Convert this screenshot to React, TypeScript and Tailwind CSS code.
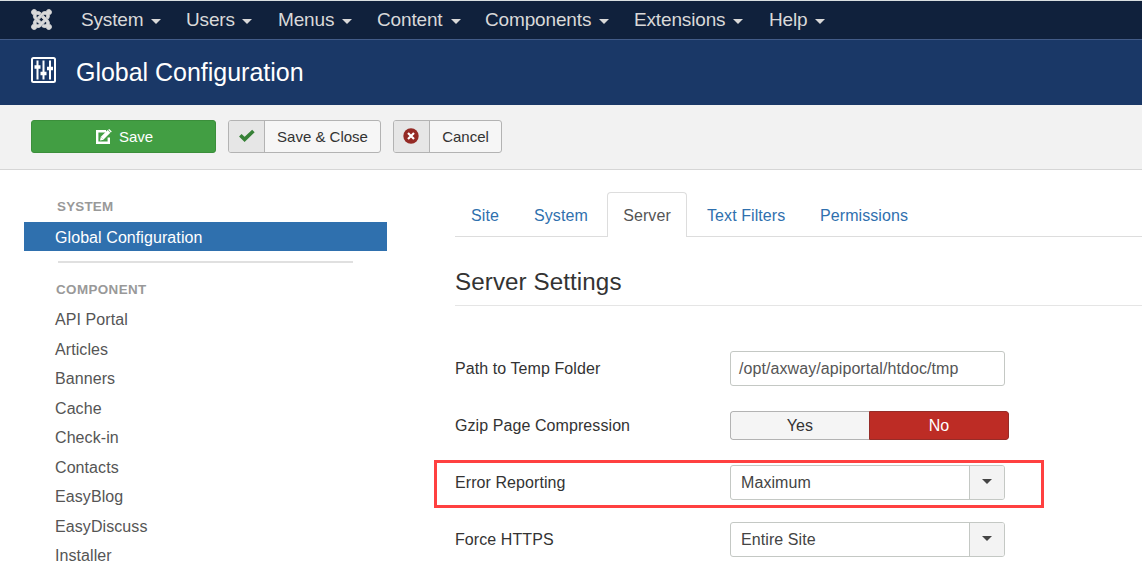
import React from "react";
import { FaJoomla } from "react-icons/fa";

const menus = [
  { label: "System", width: "w-[105px]", text: "w-[62px]" },
  { label: "Users", width: "w-[92px]", text: "w-[48px]" },
  { label: "Menus", width: "w-[99px]", text: "w-[56px]" },
  { label: "Content", width: "w-[108px]", text: "w-[66px]" },
  { label: "Components", width: "w-[149px]", text: "w-[106px]" },
  { label: "Extensions", width: "w-[135px]", text: "w-[91px]" },
  { label: "Help", width: "w-[80px]", text: "w-[38px]" },
];

const components = [
  "API Portal",
  "Articles",
  "Banners",
  "Cache",
  "Check-in",
  "Contacts",
  "EasyBlog",
  "EasyDiscuss",
  "Installer",
];

function Caret({ className }: { className: string }) {
  return (
    <svg viewBox="0 0 10 5" preserveAspectRatio="none" className={className} fill="currentColor">
      <path d="M0 0h10L5 5z" />
    </svg>
  );
}

function SlidersIcon() {
  return (
    <svg viewBox="0 0 25 26" className="h-[26px] w-[25px]" fill="none" stroke="white">
      <rect x="1" y="1" width="23" height="24" rx="1.5" strokeWidth="2" />
      <path d="M6.5 3.5v19M12.5 3.5v19M19 3.5v19" strokeWidth="2" />
      <path d="M3.5 10h6M9.5 16.5h6M16 11.5h6" strokeWidth="3.4" />
    </svg>
  );
}

function EditIcon() {
  return (
    <svg viewBox="0 0 16 15" className="h-[15px] w-4" fill="none" stroke="white">
      <path d="M10 2.2H1.2v11.6h11.6V8.5" strokeWidth="2.4" />
      <path d="M6.2 9.2 13 2.4" strokeWidth="3.8" />
      <path d="M4 11.5l.8-3.8 3 3zM12.2.8 13.2 0l2.6 2.6-1 1z" fill="white" stroke="none" />
    </svg>
  );
}

function CheckIcon() {
  return (
    <svg viewBox="0 0 16 13" className="h-[13px] w-4" fill="none" stroke="#378137" strokeWidth="3.6">
      <path d="M1.3 6.2l4.3 4.2L14.4 2" />
    </svg>
  );
}

function CancelIcon() {
  return (
    <svg viewBox="0 0 16 16" className="size-4">
      <circle cx="8" cy="8" r="7.7" fill="#942a25" />
      <path d="M5 5l6 6M11 5l-6 6" stroke="white" strokeWidth="2.2" />
    </svg>
  );
}

function Field({ label, children }: { label: string; children: React.ReactNode }) {
  return (
    <div className="flex h-[57px] items-center">
      <div className="w-[275px] shrink-0">{label}</div>
      {children}
    </div>
  );
}

function Select({ value }: { value: string }) {
  return (
    <div className="flex h-[35px] w-[275px] overflow-hidden rounded-[3px] border border-[#c4c8c4] text-[#444]">
      <div className="flex flex-1 items-center pl-[10px]">{value}</div>
      <div className="flex w-[35px] items-center justify-center border-l border-[#c4c8c4] bg-[#f3f3f3]">
        <Caret className="mr-px mb-0.5 h-[5px] w-[10px]" />
      </div>
    </div>
  );
}

export default function App() {
  return (
    <div className="flex h-[570px] w-[1142px] flex-col overflow-hidden bg-white font-['Liberation_Sans',sans-serif] text-base leading-5 tracking-[0.08px] text-[#333]">
      <nav className="flex h-10 shrink-0 items-center border-t border-b border-t-[#d9dfe0] border-b-[#425b87] bg-[#10213c] text-[19px] tracking-[-0.15px] text-[#d9d9d9]">
        <div className="w-[81px] shrink-0 pl-[30px]">
          <FaJoomla className="mb-0.5 size-[23px] overflow-visible stroke-current [stroke-width:18px]" />
        </div>
        {menus.map((m) => (
          <div key={m.label} className={`flex shrink-0 items-center whitespace-nowrap ${m.width}`}>
            <span className={m.text}>{m.label}</span>
            <Caret className="mt-[3px] ml-2 h-[5px] w-[10px]" />
          </div>
        ))}
      </nav>
      <header className="flex h-[65px] shrink-0 items-center bg-[#1a3867] pb-0.5 pl-[31px] text-white">
        <div className="-mt-1">
          <SlidersIcon />
        </div>
        <h1 className="ml-5 text-[25px] tracking-[-0.02px]">Global Configuration</h1>
      </header>
      <div className="flex h-[65px] shrink-0 gap-3 border-b border-[#d6d6d6] bg-[#f2f2f2] pt-[15px] pl-[31px] text-[15px] tracking-normal">
        <button className="flex h-[33px] w-[185px] items-center justify-center gap-[7px] rounded-[3px] border border-[#3b8f3b] bg-[#429e43] pl-0.5 text-white">
          <EditIcon />
          Save
        </button>
        <button className="flex h-[33px] w-[153px] overflow-hidden rounded-[3px] border border-[#b3b3b3] bg-[#f6f6f6]">
          <span className="flex h-full w-9 items-center justify-center border-r border-[#b3b3b3] bg-[#e6e6e6] pb-0.5">
            <CheckIcon />
          </span>
          <span className="flex h-full flex-1 items-center justify-center">Save &amp; Close</span>
        </button>
        <button className="flex h-[33px] w-[109px] overflow-hidden rounded-[3px] border border-[#b3b3b3] bg-[#f6f6f6]">
          <span className="flex h-full w-9 items-center justify-center border-r border-[#b3b3b3] bg-[#e6e6e6] pr-px pb-0.5">
            <CancelIcon />
          </span>
          <span className="flex h-full flex-1 items-center justify-center">Cancel</span>
        </button>
      </div>
      <div className="flex min-h-0 flex-1">
        <aside className="w-[455px] shrink-0 pt-[27px] pl-6 text-[#555]">
          <h2 className="pl-[33px] text-[13.4px] font-bold tracking-[0.2px] text-[#999]">SYSTEM</h2>
          <div className="mt-[5px] flex h-[29px] w-[363px] items-center bg-[#2f70ae] pt-0.5 pl-[31px] text-white">
            Global Configuration
          </div>
          <div className="mt-[10px] ml-[34px] h-0.5 w-[295px] bg-[#e0e0e0]" />
          <h2 className="mt-[17px] pl-8 text-[13.4px] font-bold tracking-[0.4px] text-[#999]">COMPONENT</h2>
          <ul className="mt-[5.5px] pl-[31px]">
            {components.map((c) => (
              <li key={c} className="flex h-[29.5px] items-center">
                {c}
              </li>
            ))}
          </ul>
        </aside>
        <main className="min-w-0 flex-1">
          <div className="mt-[22px] flex h-[45px] border-b border-[#ddd] text-[#2f70ae]">
            <div className="w-[152px] shrink-0 pt-[14px] pl-4">
              <span className="inline-block w-[63px]">Site</span>
              <span>System</span>
            </div>
            <div className="h-[45px] w-20 rounded-t-[4px] border border-b-0 border-[#ddd] bg-white pt-[13px] text-center text-[#555]">
              Server
            </div>
            <div className="w-[133px] pt-[14px] pl-5">Text Filters</div>
            <div className="pt-[14px]">Permissions</div>
          </div>
          <h2 className="mt-7 h-[41px] border-b border-[#e5e5e5] text-[24.2px] leading-[34px]">Server Settings</h2>
          <div className="mt-[34px]">
            <Field label="Path to Temp Folder">
              <div className="flex h-[35px] w-[275px] items-center rounded-[3px] border border-[#c4c8c4] pl-2 text-[#555]">
                /opt/axway/apiportal/htdoc/tmp
              </div>
            </Field>
            <Field label="Gzip Page Compression">
              <div className="flex h-[29px] w-[279px] overflow-hidden rounded-[3px]">
                <div className="flex flex-1 items-center justify-center rounded-l-[3px] border border-r-0 border-[#b3b3b3] bg-[#f5f5f5]">
                  Yes
                </div>
                <div className="flex w-[140px] items-center justify-center rounded-r-[3px] border border-[#962c28] bg-[#bd2c25] text-white">
                  No
                </div>
              </div>
            </Field>
            <div className="relative">
              <Field label="Error Reporting">
                <Select value="Maximum" />
              </Field>
              <div className="pointer-events-none absolute top-[6px] -left-[21px] h-[48px] w-[610px] border-3 border-[#ff4040]" />
            </div>
            <Field label="Force HTTPS">
              <Select value="Entire Site" />
            </Field>
          </div>
        </main>
      </div>
    </div>
  );
}
